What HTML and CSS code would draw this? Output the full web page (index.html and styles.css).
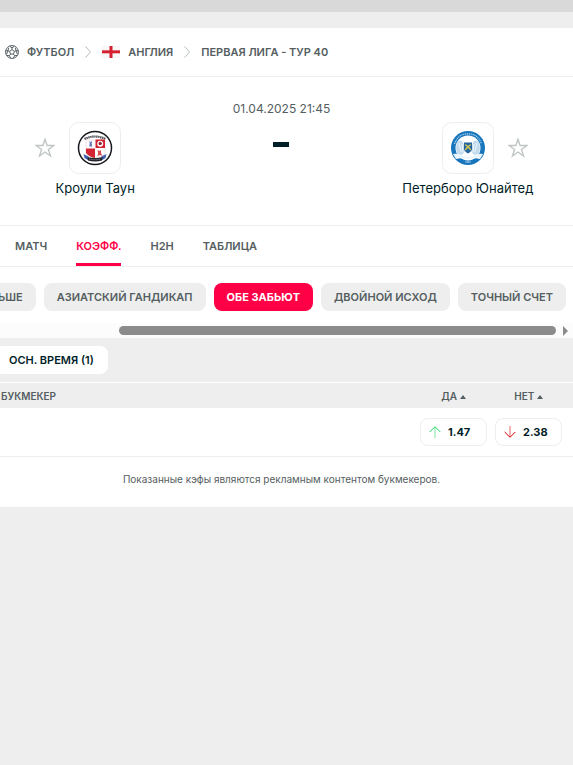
FILE: index.html
```html
<!DOCTYPE html>
<html lang="ru">

<head>
    <meta charset="UTF-8">
    <meta name="viewport" content="width=device-width, initial-scale=1.0">
    <title>Кроули Таун - Петерборо Юнайтед</title>
    <link rel="stylesheet" href="styles.css">
</head>

<body>
    <div class="topbar"></div>
    <main class="detail">
        <nav class="breadcrumbs">
            <a href="#">
                <svg class="ball" viewBox="0 0 20 20" fill="none" stroke="#555e61" stroke-width="1.4">
                    <circle cx="10" cy="10" r="9.2" />
                    <path d="M10 6.500l3.400 2.500-1.300 4H7.900l-1.300-4zM10 6.500V4M13.400 9l2.400-.8M12.100 13l1.600 2.200M7.900 13l-1.600 2.200M6.600 9l-2.400-.8M6.500 1.700L10 4l3.500-2.300M18.900 8l-3.100.2-1-4.200M15.800 8.200l2 5.200M17.500 15l-3.800.2L12 18.800M2.500 15l3.800.2L8 18.800M4.200 8.200l-2 5.200M1.100 8l3.100.2 1-4.200" />
                </svg>
                Футбол
            </a>
            <svg class="chevron" viewBox="0 0 6 12"><path d="M.5.5L5.500 6 .5 11.500" /></svg>
            <a href="#">
                <svg class="flag" viewBox="0 0 18 12">
                    <path fill="#f7f7f7" d="M0 0h18v12H0z" />
                    <path fill="#eeb5ba" d="M0 4h18v4H0z" />
                    <path fill="#d4202f" d="M7.500 0h3v4.500H18v2.500h-7.500V12h-3V7H0V4.500h7.500z" />
                </svg>
                Англия
            </a>
            <svg class="chevron" viewBox="0 0 6 12"><path d="M.5.5L5.500 6 .5 11.500" /></svg>
            <a href="#">Первая лига - Тур 40</a>
        </nav>

        <section class="match">
            <div class="team">
                <div class="team-logo">
                    <button class="star" aria-label="Добавить Кроули Таун в избранное">
                        <svg viewBox="0 0 20 20"><path d="M10 1.200l2.100 6.300h6.700l-5.400 4 2.100 6.500-5.500-4-5.500 4 2.100-6.500-5.400-4h6.700z" /></svg>
                    </button>
                    <a class="crest" href="#" aria-label="Кроули Таун">
                        <svg viewBox="0 0 36 36">
                            <circle cx="18" cy="18" r="16.500" fill="#fff" stroke="#15171c" stroke-width="1.500" />
                            <path d="M7.500 9Q18 4 28.500 9" fill="none" stroke="#55565c" stroke-width="2.200" stroke-dasharray="1.500 .5" />
                            <path d="M9 10h19v13l-2 3H11l-2-3z" fill="#fff" stroke="#e6c3c6" stroke-width=".5" />
                            <path d="M18.500 9.500H28V18h-9.500zM9 18.500h9V28q-5-.5-9-5z" fill="#d52232" />
                            <circle cx="23.200" cy="13.700" r="3" fill="#fff" />
                            <path d="M23.200 11.500l1.800 1.400-.7 2.100h-2.200l-.7-2.100z" fill="#8f2633" />
                            <path d="M12.500 11l1.300 1 1.300-1-.4 2.500.5 3h-3l.5-3z" fill="#6875b7" />
                            <path d="M20.500 20l2 1 1.500-1v3l1.500 3-2.500-1-2.500 1 .7-3z" fill="#d84a4f" />
                            <path d="M6.500 24l3 1.500 2 1v4l-4-2.500zM29.500 24l-3 1.500-2 1v4l4-2.500z" fill="#3f5fae" />
                            <path d="M10.500 27q7.500 2 15 0l-.5 3.500q-7 2-14 0z" fill="#22232a" />
                            <path d="M12 29q6 1.300 12 0" fill="none" stroke="#9a9ca6" stroke-width=".8" stroke-dasharray="1 .7" />
                        </svg>
                    </a>
                </div>
                <a class="team-name" href="#">Кроули Таун</a>
            </div>
            <div class="score">
                <time datetime="2025-04-01T21:45">01.04.2025 21:45</time>
                <span class="dash"></span>
            </div>
            <div class="team away">
                <div class="team-logo">
                    <a class="crest" href="#" aria-label="Петерборо Юнайтед">
                        <svg viewBox="0 0 36 36">
                            <circle cx="18" cy="18" r="17" fill="#1876bd" />
                            <circle cx="18" cy="18" r="12.500" fill="#fff" />
                            <path d="M4.500 14Q8 3.800 18 3.800T31.500 14" fill="none" stroke="#a8d0ec" stroke-width="1.200" stroke-dasharray="1.200 .7" />
                            <path d="M7 12q3-3 6 0l2 9-3 4-5-1-1-6zM29 12q-3-3-6 0l-2 9 3 4 5-1 1-6z" fill="#c3dcef" />
                            <path d="M9 13l2 9M12 14l1 8M27 13l-2 9M24 14l-1 8" stroke="#fff" stroke-width=".7" />
                            <path d="M14 12.500h8v7q-1 2.500-4 4-3-1.500-4-4z" fill="#2464a0" />
                            <path d="M15.200 14.500l2 1.700h1.600l2-1.700M15.200 20l2-2.500h1.600l2 2.500" fill="none" stroke="#d1c650" stroke-width="1.300" />
                            <path d="M3 24q4-1 8 1.500 7 2 14 0 4-2.500 8-1.500l-3 5q-5-1-7-.5-5 1.500-10 0-2-.5-7 .5z" fill="#eef7fd" />
                            <path d="M15.500 32h5" stroke="#add2ed" stroke-width="1.500" stroke-dasharray="1 .4" />
                        </svg>
                    </a>
                    <button class="star" aria-label="Добавить Петерборо Юнайтед в избранное">
                        <svg viewBox="0 0 20 20"><path d="M10 1.200l2.100 6.300h6.700l-5.400 4 2.100 6.500-5.500-4-5.500 4 2.100-6.500-5.400-4h6.700z" /></svg>
                    </button>
                </div>
                <a class="team-name" href="#">Петерборо Юнайтед</a>
            </div>
        </section>

        <nav class="tabs">
            <a href="#">Матч</a>
            <a href="#" class="active">Коэфф.</a>
            <a href="#">H2H</a>
            <a href="#">Таблица</a>
        </nav>

        <div class="markets">
            <button>Больше/меньше</button>
            <button>Азиатский гандикап</button>
            <button class="active">Обе забьют</button>
            <button>Двойной исход</button>
            <button>Точный счет</button>
        </div>
        <div class="scrollbar">
            <div class="thumb"></div>
            <svg viewBox="0 0 5 10"><path d="M0 0l5 5-5 5z" /></svg>
        </div>

        <div class="periods">
            <button>Осн. время (1)</button>
        </div>

        <table class="odds">
            <thead>
                <tr>
                    <th class="bookmaker">Букмекер</th>
                    <th class="value">Да <svg viewBox="0 0 6 4"><path d="M3 0l3 4H0z" /></svg></th>
                    <th class="value">Нет <svg viewBox="0 0 6 4"><path d="M3 0l3 4H0z" /></svg></th>
                </tr>
            </thead>
            <tbody>
                <tr>
                    <td></td>
                    <td>
                        <a class="odd up" href="#">
                            <svg viewBox="0 0 12 12"><path class="stem" d="M6 12V1" /><path d="M.7 6L6 .7 11.300 6" /></svg>
                            1.47
                        </a>
                    </td>
                    <td>
                        <a class="odd down" href="#">
                            <svg viewBox="0 0 12 12"><path class="stem" d="M6 0v11" /><path d="M.7 6L6 11.300 11.300 6" /></svg>
                            2.38
                        </a>
                    </td>
                </tr>
            </tbody>
        </table>

        <p class="notice">Показанные кэфы являются рекламным контентом букмекеров.</p>
    </main>
</body>

</html>
```
FILE: styles.css
```css
* {
    box-sizing: border-box;
}

body {
    margin: 0;
    background: #eeeeee;
    color: #001e28;
    font-family: Inter, Roboto, "Liberation Sans", sans-serif;
    font-size: 11px;
    line-height: 16px;
}

a {
    color: inherit;
    text-decoration: none;
}

button {
    border: none;
    font: inherit;
    color: inherit;
    cursor: pointer;
}

svg {
    display: block;
    flex: none;
}

.topbar {
    height: 12px;
    background: #d9d9d9;
    margin-bottom: 16px;
}

.detail {
    background: #fff;
    overflow: hidden;
}

.breadcrumbs {
    display: flex;
    align-items: center;
    gap: 11px;
    height: 49px;
    padding-left: 5px;
    border-bottom: 1px solid #eeeeee;
    color: #555e61;
    font-weight: 600;
    text-transform: uppercase;
    white-space: nowrap;
}

.breadcrumbs a {
    display: flex;
    align-items: center;
    gap: 8px;
}

.ball {
    width: 14px;
    height: 14px;
}

.flag {
    width: 18px;
    height: 12px;
}

.chevron {
    width: 6px;
    height: 12px;
    fill: none;
    stroke: #b4baba;
}

/* match header */
.match {
    display: grid;
    grid-template-columns: repeat(3, 1fr);
    padding: 24px 12px 29px 2px;
    font-size: 13px;
    text-align: center;
}

.team {
    padding-top: 21px;
}

.team-logo {
    display: grid;
    grid-template-columns: 1fr 52px 1fr;
    align-items: center;
    column-gap: 14px;
    margin-bottom: 6px;
}

.away .crest {
    grid-column: 2;
}

.crest {
    display: flex;
    align-items: center;
    justify-content: center;
    height: 52px;
    border: 1px solid #eeeeee;
    border-radius: 10px;
}

.crest svg {
    width: 36px;
    height: 36px;
}

.star {
    justify-self: end;
    padding: 0;
    background: none;
}

.away .star {
    justify-self: start;
}

.star svg {
    width: 20px;
    height: 20px;
    fill: none;
    stroke: #c0c5c6;
    stroke-width: 1.4;
}

.team-name {
    white-space: nowrap;
}

.score {
    color: #555e61;
    font-size: 12px;
}

.dash {
    display: block;
    width: 16px;
    height: 5px;
    margin: 25px auto 0;
    background: #001e28;
}

.tabs {
    display: flex;
    gap: 29px;
    height: 42px;
    padding-left: 15px;
    border-top: 1px solid #eeeeee;
    border-bottom: 1px solid #eeeeee;
    color: #555e61;
    font-weight: 600;
    text-transform: uppercase;
}

.tabs a {
    padding-top: 12px;
}

.tabs .active {
    color: #ff0046;
    border-bottom: 3px solid #ff0046;
    border-radius: 2px 2px 0 0;
}

/* the row is scrolled to its end */
.markets {
    display: flex;
    justify-content: flex-end;
    gap: 8px;
    padding: 16px 7px 12px 0;
    overflow: hidden;
}

.markets button,
.periods button {
    flex: none;
    height: 28px;
    padding: 0 14px;
    border-radius: 8px;
    background: #eeeeee;
    color: #555e61;
    font-weight: 600;
    text-transform: uppercase;
    white-space: nowrap;
}

.markets button {
    padding: 0 13px;
}

.markets .active {
    background: #ff0046;
    color: #fff;
    font-weight: 700;
}

.scrollbar {
    display: flex;
    align-items: center;
    justify-content: flex-end;
    gap: 7px;
    height: 15px;
    padding-right: 5px;
    background: #fcfcfc;
}

.thumb {
    width: 77%;
    height: 9px;
    border-radius: 5px;
    background: #8b8b8b;
}

.scrollbar svg {
    width: 5px;
    height: 10px;
    fill: #8b8b8b;
}

.periods {
    display: flex;
    padding: 8px 0;
    background: #eeeeee;
    border-bottom: 1px solid #fff;
}

.periods button {
    margin-left: -5px;
    background: #fff;
    color: #001e28;
}

.odds {
    width: 100%;
    border-collapse: collapse;
    table-layout: fixed;
}

.odds th {
    height: 25px;
    padding: 0 8px 0 0;
    background: #eeeeee;
    color: #555e61;
    font-size: 10px;
    font-weight: 600;
    text-transform: uppercase;
}

.odds .bookmaker {
    padding-left: 1px;
    text-align: left;
}

.odds .value {
    width: 75px;
}

.odds .value:last-child {
    width: 78px;
    padding-right: 11px;
}

.odds th svg {
    display: inline-block;
    width: 6px;
    height: 4px;
    fill: #555e61;
    vertical-align: 1px;
}

.odds td {
    height: 48px;
    padding: 0 8px 0 0;
    border-bottom: 1px solid #eeeeee;
}

.odds td:last-child {
    padding-right: 11px;
}

.odd {
    display: flex;
    align-items: center;
    gap: 7px;
    height: 28px;
    padding-left: 8px;
    border: 1px solid #eeeeee;
    border-radius: 8px;
    font-weight: 700;
}

.odd svg {
    width: 12px;
    height: 12px;
    fill: none;
}

.odd .stem {
    opacity: 0.6;
}

.up svg {
    stroke: #1ed760;
}

.down svg {
    stroke: #dc0000;
}

.notice {
    margin: 0;
    padding: 14px 10px 20px 0;
    color: #555e61;
    font-size: 10px;
    text-align: center;
}
```
